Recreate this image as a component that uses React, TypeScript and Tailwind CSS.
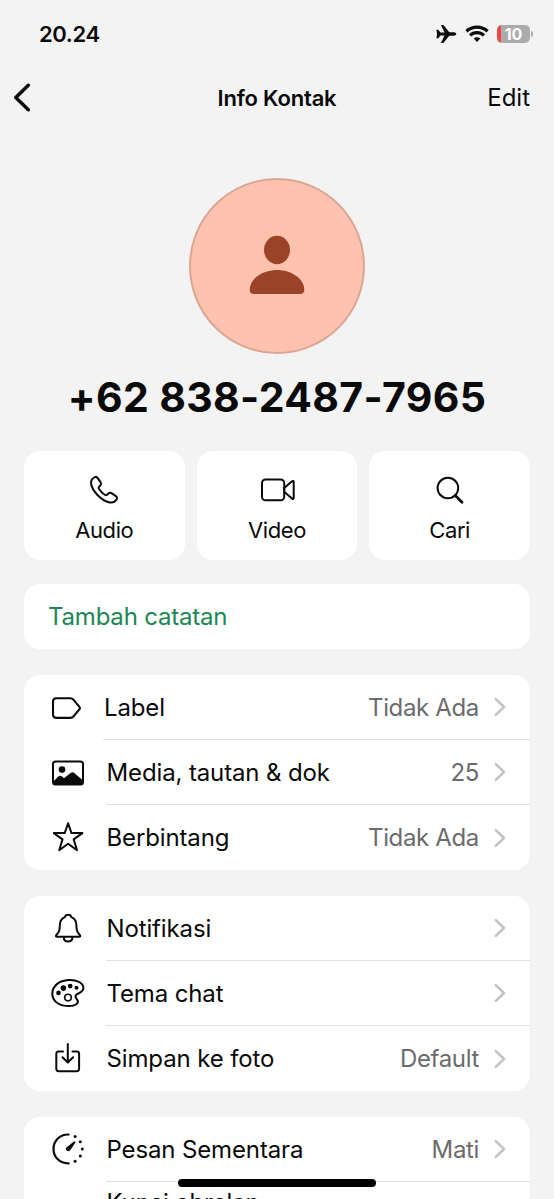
import { FC, ReactNode } from "react";
import clsx from "clsx";

const TagIcon = () => (
    <svg width="36" height="36" viewBox="0 0 36 36" fill="none" stroke="#0a0a0a" strokeWidth="2.1" strokeLinejoin="round">
        <path d="M6.5 9.2H20.2Q22.2 9.2 23.4 10.6L29.6 18.1Q30.5 19.1 29.6 20.1L23.4 27.5Q22.2 28.9 20.2 28.9H6.5Q3 28.9 3 25.4V12.7Q3 9.2 6.5 9.2Z" />
    </svg>
)

const PhotoIcon = () => (
    <svg width="36" height="36" viewBox="0 0 36 36">
        <rect x="3" y="7.4" width="30" height="23.2" rx="2.6" fill="none" stroke="#0a0a0a" strokeWidth="2" />
        <circle cx="12" cy="15.6" r="3.3" fill="#0a0a0a" />
        <path d="M3 27.9L8.2 22.6Q10.2 20.8 12.2 22.6L14 24.2L20.6 19Q22.4 17.5 24.3 19L33 26.4V28.4Q33 30.6 30.4 30.6H5.6Q3 30.6 3 28.4Z" fill="#0a0a0a" />
    </svg>
)

const StarIcon = () => (
    <svg width="36" height="36" viewBox="0 0 36 36" fill="none" stroke="#0a0a0a" strokeWidth="2" strokeLinejoin="round">
        <path d="M18.1 4.2L21.5 14.1H32.4L23.7 20.4L27 31.2L18.1 24.8L9.2 31.2L12.5 20.4L3.8 14.1H14.7Z" />
    </svg>
)

const BellIcon = () => (
    <svg width="36" height="36" viewBox="0 0 36 36" fill="none" stroke="#0a0a0a" strokeWidth="2" strokeLinejoin="round">
        <path d="M15.1 6.9C15.4 4.1 20.8 4.1 21.1 6.9C25 8.5 26.3 11.7 26.4 15.5C26.5 21 27.2 22.2 29.6 24.7Q31.2 26.7 29 26.7H7.2Q5 26.7 6.6 24.7C9 22.2 9.7 21 9.8 15.5C9.9 11.7 11.2 8.5 15.1 6.9Z" />
        <path d="M13.7 27.1C14 33.1 22.2 33.1 22.5 27.1" />
    </svg>
)

const PaletteIcon = () => (
    <svg width="36" height="36" viewBox="0 0 36 36" fill="none" stroke="#0a0a0a" strokeWidth="2" strokeLinejoin="round">
        <path d="M18.5 5C26.5 4.5 33.3 7.8 33.4 13.1C33.5 17.5 28.2 17.9 26.2 19.8C24.3 21.6 26.2 23.3 27.4 25.1C29.4 28.2 25 31 19.5 31.1C10 31.3 2.3 26.7 2.3 18.8C2.3 10.9 9.2 5.5 18.5 5Z" />
        <circle cx="18" cy="22.6" r="3.3" strokeWidth="1.6" />
        <g fill="#0a0a0a" stroke="none">
            <circle cx="8.5" cy="17.9" r="2.3" />
            <circle cx="13.4" cy="13.1" r="2.8" />
            <circle cx="20.2" cy="11.1" r="2.4" />
            <circle cx="26.5" cy="12.7" r="2" />
        </g>
    </svg>
)

const SaveIcon = () => (
    <svg width="36" height="36" viewBox="0 0 36 36" fill="none" stroke="#0a0a0a" strokeWidth="2" strokeLinecap="round" strokeLinejoin="round">
        <path d="M13 11.5H8.7Q6.3 11.5 6.3 13.9V28.8Q6.3 31.2 8.7 31.2H26.7Q29.1 31.2 29.1 28.8V13.9Q29.1 11.5 26.7 11.5H22.5" />
        <path d="M17.8 4V22.3M12.5 17.3L17.8 22.5L23.1 17.3" />
    </svg>
)

const TimerIcon = () => (
    <svg width="36" height="36" viewBox="0 0 36 36">
        <path d="M18.6 3.5C10 3.2 3.5 9.8 3.5 17.9C3.5 26 10 32.6 18.6 32.3" fill="none" stroke="#0a0a0a" strokeWidth="2.2" strokeLinecap="round" />
        <path d="M24.9 10.4Q25.8 11 25.3 11.8L20 19.4C18 21.6 14.6 18.8 16.5 16.6L23.8 10.5Q24.4 10 24.9 10.4Z" fill="#0a0a0a" />
        <g fill="#0a0a0a">
            <circle cx="25.1" cy="5.5" r="1.5" />
            <circle cx="30.3" cy="10.7" r="1.5" />
            <circle cx="32.3" cy="17.9" r="1.5" />
            <circle cx="30.3" cy="24.9" r="1.5" />
            <circle cx="25.1" cy="30.2" r="1.5" />
        </g>
    </svg>
)

const PhoneIcon = () => (
    <svg width="36" height="36" viewBox="0 0 36 36" fill="none" stroke="#0a0a0a" strokeWidth="2" strokeLinejoin="round">
        <path d="M8.2 5.5C9.4 4.7 10.9 4.9 11.7 6.1L14.7 10.4C15.4 11.5 15.2 12.6 14.3 13.5L13 14.8C12.5 15.4 12.5 16 12.9 16.7C14.3 19 16.7 21.4 19.2 23C19.9 23.4 20.5 23.3 21.1 22.8L22.4 21.5C23.3 20.7 24.4 20.5 25.5 21.2L29.9 24.2C31.1 25 31.3 26.4 30.4 27.7C28.6 30.3 26 31.1 22.8 30.2C18.9 29.2 14.8 26.4 11.2 22.7C8 19.4 5.9 15.8 5.2 12.6C4.6 9.5 5.6 7 8.2 5.5Z" />
    </svg>
)

const VideoIcon = () => (
    <svg width="36" height="36" viewBox="0 0 36 36" fill="none" stroke="#0a0a0a" strokeWidth="2" strokeLinejoin="round">
        <rect x="3" y="7.5" width="22.2" height="20.8" rx="3.6" />
        <path d="M25.2 16L33 9.3Q34.7 8.2 34.7 10.2V25.7Q34.7 27.7 33 26.6L25.2 19.8Z" />
    </svg>
)

const SearchIcon = () => (
    <svg width="36" height="36" viewBox="0 0 36 36" fill="none" stroke="#0a0a0a" strokeLinecap="round">
        <circle cx="15.9" cy="16" r="10.3" strokeWidth="2" />
        <path d="M23.5 23.8L30 30.2" strokeWidth="2.8" />
    </svg>
)

const Chevron = () => (
    <svg width="12" height="20" viewBox="0 0 12 20" fill="none" stroke="#c2c2c4" strokeWidth="2.5" strokeLinecap="round" strokeLinejoin="round">
        <path d="M1.8 2.2L10 10L1.8 17.8" />
    </svg>
)

const Action: FC<{ icon: ReactNode, label: string }> = ({ icon, label }) => {
    return (
        <button className="flex h-[109px] flex-col items-center rounded-2xl bg-white pt-[21px]">
            {icon}
            <span className="mt-[7px] text-[22px] leading-[30px] tracking-[-0.4px]">{label}</span>
        </button>
    )
}

type RowProps = {
    icon: ReactNode
    label: string
    value?: string
    narrow?: boolean
    last?: boolean
}

const Row: FC<RowProps> = ({ icon, label, value, narrow, last }) => {
    return (
        <li className="flex h-[65px] items-center pl-[26px]">
            <span className="mb-[2px]">{icon}</span>
            <div className={clsx("flex h-full flex-1 items-center pr-6 text-2xl", narrow ? "ml-[17px]" : "ml-5", !last && "border-b border-[#e2e2e2]")}>
                <span className={clsx("tracking-[-0.13px]", narrow ? "pl-px" : "pl-[0.5px]", last ? "pt-px" : "pt-[2px]")}>{label}</span>
                <span className={clsx("mr-[15px] ml-auto tracking-[-0.35px] text-[#6b6b6d]", last ? "pt-px" : "pt-[2px]")}>{value}</span>
                <Chevron />
            </div>
        </li>
    )
}

const App = () => {
    return (
        <div className="relative flex h-[1199px] w-[554px] flex-col overflow-hidden bg-[#f3f3f3] font-[Inter,sans-serif] text-[#0a0a0a]">
            {/* status bar */}
            <div className="flex h-[68px] shrink-0 items-center pr-[21px] pl-[39px]">
                <span className="text-[22px] font-semibold tracking-[-0.4px]">20.24</span>
                <div className="ml-auto flex items-center">
                    <svg width="22" height="20" viewBox="0 0 22 20" fill="#0a0a0a">
                        <path d="M.4 5.8H2.2L4.4 8.6L8.5 8.4L5 1H7.4L13.3 8.2L18 8.3Q20.4 8.8 20.4 10Q20.4 11.2 18 11.7L13.3 11.8L7.4 19H5L8.5 11.6L4.4 11.4L2.2 14.2H.4L1.1 10Z" />
                    </svg>
                    <svg className="ml-[7px]" width="24" height="18" viewBox="0 0 24 18" fill="none" stroke="#0a0a0a" strokeWidth="3.2">
                        <path d="M1.4 6.3Q6 2.2 12 2.2T22.6 6.3" />
                        <path d="M5.1 10.3Q8 7.6 12 7.6T18.9 10.3" />
                        <path d="M12 17L8.7 13.5Q12 11 15.3 13.5Z" fill="#0a0a0a" stroke="none" />
                    </svg>
                    <div className="ml-2 flex h-[18px] w-[33px] items-center justify-center rounded-[5px] bg-[linear-gradient(to_right,#ee4545_4px,#ababab_4px)] text-base leading-[18px] font-bold text-white">
                        10
                    </div>
                    <div className="ml-px h-[6px] w-[2px] rounded-r-full bg-[#ababab]" />
                </div>
            </div>

            <div className="grid h-[60px] shrink-0 grid-cols-[1fr_auto_1fr] items-center pr-6 pl-6">
                <svg className="-ml-[11px]" width="20" height="30" viewBox="0 0 20 30" fill="none" stroke="#0a0a0a" strokeWidth="3.4" strokeLinecap="round" strokeLinejoin="round">
                    <path d="M15.3 2.2L2.8 14.5L15.3 26.8" />
                </svg>
                <h1 className="text-center text-[22px] font-semibold tracking-[-0.2px] whitespace-nowrap">Info Kontak</h1>
                <button className="text-right text-2xl">Edit</button>
            </div>

            <div className="mt-[50px] flex size-[176px] shrink-0 items-center justify-center self-center rounded-full border-2 border-[#dca695] bg-[#ffc2ae]">
                <svg className="mb-[2px]" width="56" height="60" viewBox="0 0 56 60" fill="#9b4329">
                    <ellipse cx="28" cy="15" rx="13" ry="14.2" />
                    <path d="M28 35C42 35 55.3 43.5 55.3 55Q55.3 59 51 59H5Q.7 59 .7 55C.7 43.5 14 35 28 35Z" />
                </svg>
            </div>
            <h2 className="mt-[19px] text-center text-[41px] leading-[48px] font-bold tracking-[0.35px] whitespace-nowrap">+62 838-2487-7965</h2>

            <div className="mt-[30px] grid grid-cols-3 gap-3 px-6">
                <Action icon={<PhoneIcon />} label="Audio" />
                <Action icon={<VideoIcon />} label="Video" />
                <Action icon={<SearchIcon />} label="Cari" />
            </div>

            <div className="mx-6 mt-6 flex h-[65px] shrink-0 items-center rounded-2xl bg-white pl-6 text-2xl tracking-[-0.2px] text-[#1c8754]">
                Tambah catatan
            </div>

            <ul className="mx-6 mt-[26px] shrink-0 rounded-2xl bg-white">
                <Row icon={<TagIcon />} label="Label" value="Tidak Ada" narrow />
                <Row icon={<PhotoIcon />} label="Media, tautan & dok" value="25" />
                <Row icon={<StarIcon />} label="Berbintang" value="Tidak Ada" last />
            </ul>

            <ul className="mx-6 mt-[26px] shrink-0 rounded-2xl bg-white">
                <Row icon={<BellIcon />} label="Notifikasi" />
                <Row icon={<PaletteIcon />} label="Tema chat" />
                <Row icon={<SaveIcon />} label="Simpan ke foto" value="Default" last />
            </ul>

            <ul className="mx-6 mt-[26px] shrink-0 rounded-t-2xl bg-white">
                <Row icon={<TimerIcon />} label="Pesan Sementara" value="Mati" />
                <li className="h-[100px] pt-[5px] pl-[82.5px] text-2xl tracking-[-0.2px]">Kunci obrolan</li>
            </ul>

            {/* home indicator */}
            <div className="absolute top-[1179px] left-[178px] h-2 w-[198px] rounded-full bg-black" />
        </div>
    )
}

export default App;
